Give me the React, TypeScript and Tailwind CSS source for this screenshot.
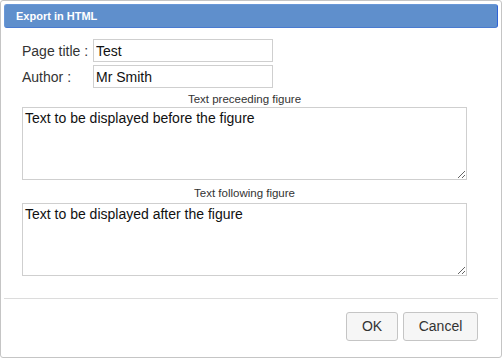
import React from "react";

export default function App() {
  const font = { fontFamily: '"Liberation Sans", Arial, sans-serif' };
  return (
    <div className="w-[503px] h-[359px] bg-white" style={font}>
      <div className="w-[502px] h-[358px] border border-[#c5c5c5] rounded-[3px] p-[3px] flex flex-col bg-white">
        <div className="h-[24px] shrink-0 rounded-[3px] bg-[#5f8fcc] border border-[#6a98d8] border-r-[#2f63d6] border-b-[#4a7bd0] flex items-center pl-[11px]">
          <span className="text-white font-bold text-[11px] leading-none">Export in HTML</span>
        </div>
        <div className="flex flex-col px-[18px] pt-[11px]">
          <div className="flex items-center h-[23px]">
            <label className="w-[71px] text-[14px] text-[#333] leading-none">Page title :</label>
            <input
              defaultValue="Test"
              className="w-[180px] h-[23px] border border-[#cfcfcf] px-[2px] text-[14px] text-[#111] outline-none"
              style={font}
            />
          </div>
          <div className="flex items-center h-[23px] mt-[3px]">
            <label className="w-[71px] text-[14px] text-[#333] leading-none">Author :</label>
            <input
              defaultValue="Mr Smith"
              className="w-[180px] h-[23px] border border-[#cfcfcf] px-[2px] text-[14px] text-[#111] outline-none"
              style={font}
            />
          </div>
          <div className="w-[445px] text-center text-[11.5px] text-[#333] leading-[13px] mt-[5px] mb-[1px]">
            Text preceeding figure
          </div>
          <textarea
            defaultValue="Text to be displayed before the figure"
            className="block w-[445px] h-[73px] border border-[#cfcfcf] px-[2px] py-[2px] text-[14px] leading-[17px] text-[#111] outline-none"
            style={font}
          />
          <div className="w-[445px] text-center text-[11.5px] text-[#333] leading-[13px] mt-[7px] mb-[3px]">
            Text following figure
          </div>
          <textarea
            defaultValue="Text to be displayed after the figure"
            className="block w-[445px] h-[73px] border border-[#cfcfcf] px-[2px] py-[2px] text-[14px] leading-[17px] text-[#111] outline-none"
            style={font}
          />
        </div>
        <div className="mt-[22px] border-t border-[#dcdcdc] flex justify-end gap-[5px] pr-[20px] pt-[13px]">
          <button className="w-[52px] h-[29px] bg-[#f6f6f6] border border-[#c5c5c5] rounded-[3px] text-[14px] text-[#333]" style={font}>
            OK
          </button>
          <button className="w-[75px] h-[29px] bg-[#f6f6f6] border border-[#c5c5c5] rounded-[3px] text-[14px] text-[#333]" style={font}>
            Cancel
          </button>
        </div>
      </div>
    </div>
  );
}
